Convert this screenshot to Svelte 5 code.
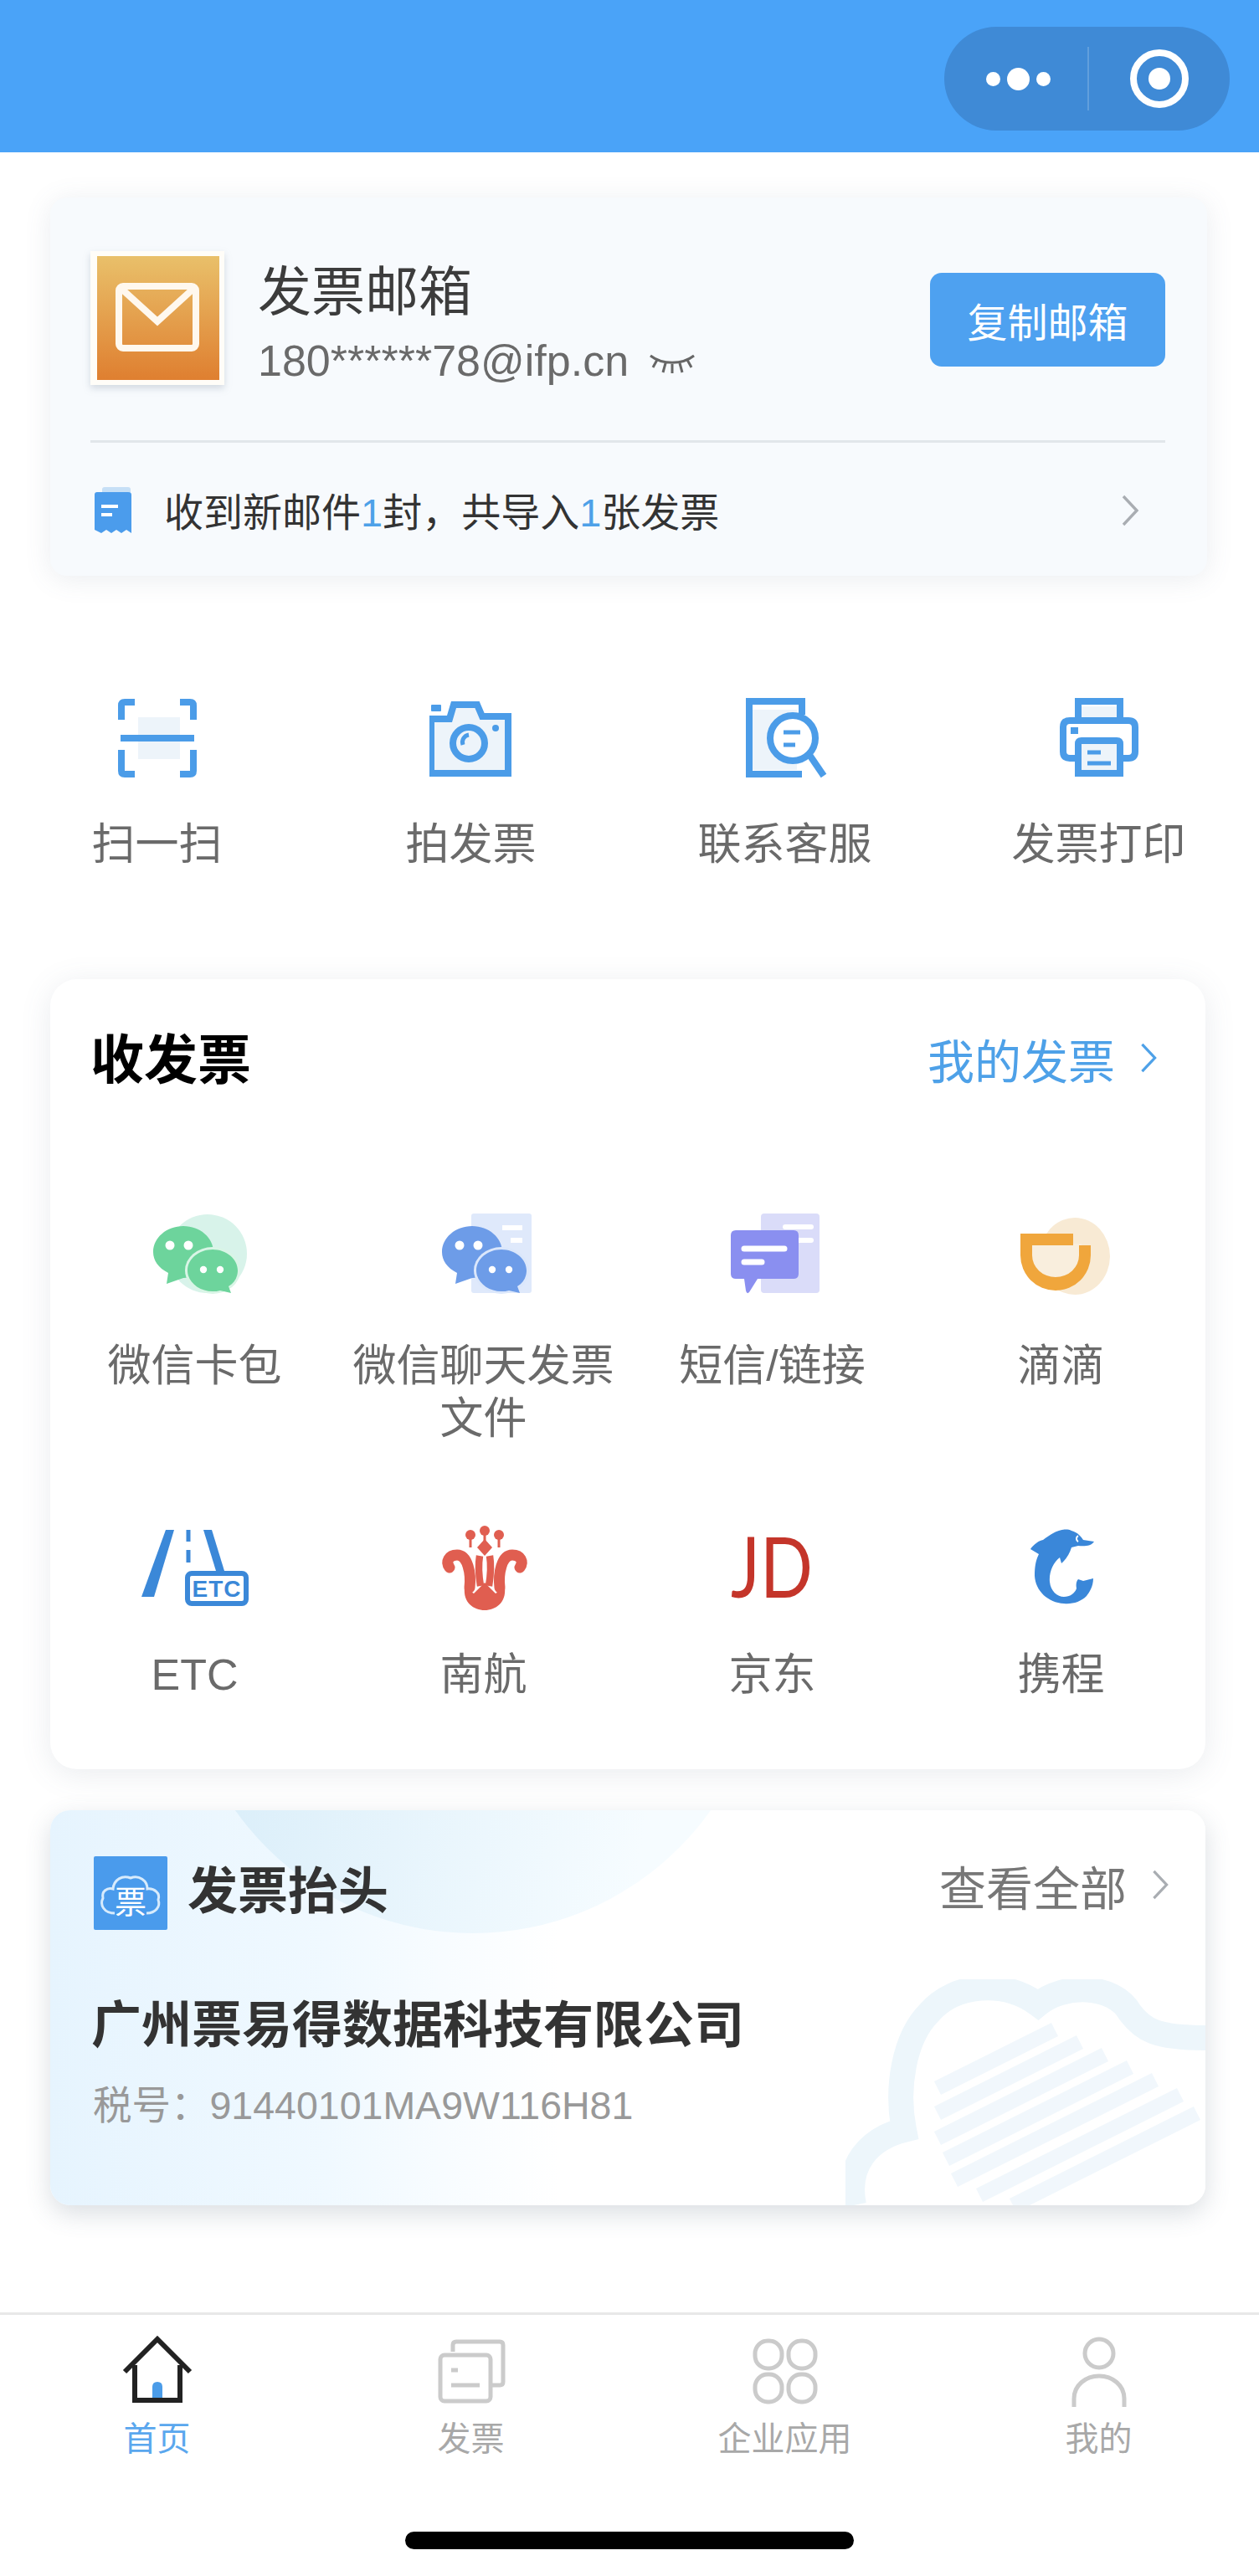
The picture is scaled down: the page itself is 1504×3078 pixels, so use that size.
<script>
  const receive1 = ['微信卡包', '微信聊天发票文件', '短信/链接', '滴滴'];
  const receive2 = ['ETC', '南航', '京东', '携程'];
</script>

{#snippet chevron(cls)}
  <svg class="chev {cls}" viewBox="0 0 24 40"><polyline points="4,3 20,20 4,37" /></svg>
{/snippet}

<div class="page">
  <header class="top">
    <div class="capsule">
      <div class="more"><i class="dot"></i><i class="dot big"></i><i class="dot"></i></div>
      <div class="sep"></div>
      <svg class="target" viewBox="0 0 80 80"><circle cx="40" cy="40" r="31" /><circle class="core" cx="40" cy="40" r="13" /></svg>
    </div>
  </header>

  <section class="mailbox">
    <div class="mail-top">
      <div class="mail-id">
        <svg class="mail-icon" viewBox="0 0 160 160">
          <defs><linearGradient id="mg" x1="0" y1="0" x2="0" y2="1"><stop offset="0" stop-color="#e9c06a" /><stop offset="1" stop-color="#df7f30" /></linearGradient></defs>
          <rect width="160" height="160" fill="#fffdf8" />
          <rect x="8" y="6" width="146" height="148" fill="url(#mg)" />
          <rect x="34" y="42" width="92" height="74" rx="5" fill="none" stroke="#fff8ee" stroke-width="8" />
          <polyline points="36,44 80,84 124,44" fill="none" stroke="#fff8ee" stroke-width="8" />
        </svg>
        <div class="mail-text">
          <div class="mail-title">发票邮箱</div>
          <div class="mail-addr">
            <span>180******78@ifp.cn</span>
            <svg class="eye" viewBox="0 0 56 30"><path d="M2 7 C16 18 40 18 54 7 M10 12 L5 21 M20 16 L17 27 M28 17 L28 28 M37 16 L40 27 M46 12 L51 21" /></svg>
          </div>
        </div>
      </div>
      <button class="copy">复制邮箱</button>
    </div>
    <div class="mail-note">
      <svg class="note-icon" viewBox="0 0 46 56">
        <rect x="10" y="0" width="34" height="46" rx="3" fill="#c6dff6" />
        <path d="M1 9 Q1 6 4 6 H41 Q45 6 45 9 V55 L39 51 L33 55 L27 51 L21 55 L15 51 L9 55 L1 51 Z" fill="#4b9cec" />
        <rect x="9" y="21" width="20" height="4" fill="#fff" /><rect x="9" y="31" width="13" height="4" fill="#fff" />
      </svg>
      <div class="note-text">收到新邮件<b>1</b>封，共导入<b>1</b>张发票</div>
      {@render chevron('grey')}
    </div>
  </section>

  <nav class="actions">
    <div class="action">
      <svg class="act-icon" viewBox="0 0 100 96">
        <rect x="27" y="23" width="50" height="50" fill="#edf4fa" />
        <path class="s" d="M23 5 H11 Q7 5 7 9 V26 M77 5 H89 Q93 5 93 9 V26 M7 62 V87 Q7 91 11 91 H23 M93 62 V87 Q93 91 89 91 H77" />
        <path class="s" d="M6 48 H94" />
      </svg>
      <span>扫一扫</span>
    </div>
    <div class="action">
      <svg class="act-icon" viewBox="2 0 100 96">
        <rect x="4" y="8" width="12" height="8" rx="1" fill="#4b9ce8" />
        <path d="M5 24 H24 L30 8 H60 L68 20 H95 V89 H5 Z" fill="#edf4fa" />
        <path class="s" d="M4 25 H26 L31 8 H59 L65 22 H96 V90 H4 Z" />
        <circle class="s" cx="49" cy="54" r="19" /><path class="t" d="M42 56 A9 9 0 0 1 49 44" />
        <circle cx="81" cy="36" r="4" fill="#4b9ce8" />
      </svg>
      <span>拍发票</span>
    </div>
    <div class="action">
      <svg class="act-icon" viewBox="0 0 100 96">
        <rect x="10" y="14" width="54" height="72" fill="#edf4fa" />
        <path class="s" d="M70 20 V4 H7 V91 H70" />
        <circle cx="59" cy="48" r="29" fill="#fff" /><circle class="s" cx="59" cy="48" r="27" />
        <path class="s" d="M79 68 L96 93" />
        <path class="t" d="M48 41 H68 M48 56 H62" />
      </svg>
      <span>联系客服</span>
    </div>
    <div class="action">
      <svg class="act-icon" viewBox="0 0 100 96">
        <path class="s" d="M25 28 V4 H75 V28" /><path d="M29 10 H71 V26 H29 Z" fill="#edf4fa" />
        <path class="s" d="M25 72 H15 Q7 72 7 64 V35 Q7 27 15 27 H85 Q93 27 93 35 V64 Q93 72 85 72 H75" />
        <rect x="16" y="35" width="9" height="8" fill="#4b9ce8" />
        <path d="M26 52 H74 V90 H26 Z" fill="#edf4fa" />
        <path class="s" d="M25 90 V55 Q25 51 29 51 H71 Q75 51 75 55 V90 Z" />
        <path class="t" d="M36 65 H52 M36 78 H64" />
      </svg>
      <span>发票打印</span>
    </div>
  </nav>

  <section class="receive">
    <div class="rc-head">
      <h2>收发票</h2>
      <div class="rc-link">我的发票 {@render chevron('blue')}</div>
    </div>
    <div class="rc-row one">
      <div class="rc-item">
        <svg class="rc-icon" viewBox="0 0 116 116">
          <circle cx="73" cy="56" r="47" fill="#d8f3ea" />
          <path d="M44 23 C64 23 80 37 80 54 C80 71 64 85 44 85 L24 92 L26 79 C14 73 8 64 8 54 C8 37 24 23 44 23Z" fill="#6dd49c" />
          <circle cx="28" cy="46" r="5.5" fill="#fff" /><circle cx="50" cy="46" r="5.5" fill="#fff" />
          <ellipse cx="79" cy="76" rx="33" ry="28" fill="#d9f5e6" />
          <path d="M79 51 C95 51 109 62 109 76 C109 84 105 91 98 95 L101 103 L88 100 C85 101 82 101 79 101 C63 101 49 90 49 76 C49 62 63 51 79 51Z" fill="#6dd49c" />
          <circle cx="68" cy="75" r="4.2" fill="#fff" /><circle cx="88" cy="75" r="4.2" fill="#fff" />
        </svg>
        <span>{receive1[0]}</span>
      </div>
      <div class="rc-item">
        <svg class="rc-icon" viewBox="0 0 116 116">
          <rect x="43" y="8" width="72" height="95" rx="3" fill="#dfe9fb" />
          <path d="M80 25 H104 M90 40 H104" stroke="#fff" stroke-width="6" />
          <path d="M44 23 C64 23 80 37 80 54 C80 71 64 85 44 85 L24 92 L26 79 C14 73 8 64 8 54 C8 37 24 23 44 23Z" fill="#6d9ce8" />
          <circle cx="29" cy="46" r="5.5" fill="#fff" /><circle cx="51" cy="46" r="5.5" fill="#fff" />
          <ellipse cx="79" cy="76" rx="33" ry="28" fill="#dbe7fb" />
          <path d="M79 51 C95 51 109 62 109 76 C109 84 105 91 98 95 L101 103 L88 100 C85 101 82 101 79 101 C63 101 49 90 49 76 C49 62 63 51 79 51Z" fill="#6d9ce8" />
          <circle cx="68" cy="75" r="4.2" fill="#fff" /><circle cx="88" cy="75" r="4.2" fill="#fff" />
        </svg>
        <span class="wrap">{receive1[1]}</span>
      </div>
      <div class="rc-item">
        <svg class="rc-icon" viewBox="0 0 116 116">
          <rect x="44" y="8" width="70" height="95" rx="4" fill="#dadcf9" />
          <path d="M73 24 H104 M89 40 H104" stroke="#fff" stroke-width="6" stroke-linecap="round" />
          <path d="M14 28 H83 Q89 28 89 34 V80 Q89 86 83 86 H40 L30 102 Q27 105 26 100 L24 86 H14 Q8 86 8 80 V34 Q8 28 14 28Z" fill="#8a8ff0" />
          <path d="M24 50 H72 M24 66 H45" stroke="#fff" stroke-width="7" stroke-linecap="round" />
        </svg>
        <span>{receive1[2]}</span>
      </div>
      <div class="rc-item">
        <svg class="rc-icon" viewBox="0 0 116 116">
          <ellipse cx="74" cy="59" rx="42" ry="46" fill="#f8ead4" />
          <path d="M20 44 H82 V58 A31 29 0 0 1 20 58 Z" fill="#f9eedd" />
          <path fill-rule="evenodd" d="M9 32 H72 V46 H93 V58 A42 42 0 0 1 9 58 Z M23 46 V58 A28 26 0 0 0 79 58 V46 Z" fill="#f0a63c" />
        </svg>
        <span>{receive1[3]}</span>
      </div>
    </div>
    <div class="rc-row two">
      <div class="rc-item">
        <svg class="rc-icon" viewBox="0 0 116 116">
          <path d="M23 17 H33 L9 97 H-6 Z" fill="#3b88d8" />
          <path d="M50 17 V31 M50 41 V56" stroke="#3b88d8" stroke-width="5" />
          <path d="M68 17 H78 L93 66 H83 Z" fill="#3b88d8" />
          <rect x="49" y="69" width="70" height="36" rx="5" fill="#fff" stroke="#3b88d8" stroke-width="6" />
          <text class="etc" x="84" y="97" text-anchor="middle">ETC</text>
        </svg>
        <span>{receive2[0]}</span>
      </div>
      <div class="rc-item">
        <svg class="rc-icon" viewBox="0 0 116 116">
          <g fill="#e05e50">
            <circle cx="42" cy="23" r="6" /><circle cx="59" cy="18" r="6" /><circle cx="76" cy="23" r="6" />
            <path d="M59 28 L68 38 L59 48 L50 38Z" />
            <path d="M35 86 L46 93 L59 80 L72 93 L83 86 C85 104 72 113 59 113 C46 113 33 104 35 86Z" />
          </g>
          <path d="M41 86 C43 70 39 47 26 47 C16 47 12 55 17 62 M77 86 C75 70 79 47 92 47 C102 47 106 55 101 62" fill="none" stroke="#e05e50" stroke-width="13" stroke-linecap="round" />
          <path d="M53 48 C51 60 52 72 54 84 M65 48 C67 60 66 72 64 84" fill="none" stroke="#e05e50" stroke-width="8.5" />
          <path d="M42 28 V38 M76 28 V38 M59 22 V30" stroke="#e05e50" stroke-width="3" />
        </svg>
        <span>{receive2[1]}</span>
      </div>
      <div class="rc-item">
        <svg class="rc-icon" viewBox="0 0 116 116">
          <text class="jd" x="8" y="98" textLength="98" lengthAdjust="spacingAndGlyphs">JD</text>
        </svg>
        <span>{receive2[2]}</span>
      </div>
      <div class="rc-item">
        <svg class="rc-icon" viewBox="0 0 116 116">
          <path d="M48 21 C55 17 64 15 70 18 C78 20 82 26 84 29 L97 31 C94 36 86 37 78 36 L70 38 C68 45 64 52 58 57 L56 50 C48 56 43 68 44 79 C45 90 53 97 61 97 C68 97 74 93 76 87 C75 82 76 78 78 76 L84 78 L96 75 C96 85 91 92 88 96 C81 103 71 106 61 105 C42 104 27 90 26 72 C26 62 27 54 31 46 L21 40 C25 34 31 30 36 29 C40 26 44 23 48 21Z" fill="#3a87d9" />
          <path d="M78 24 A4 4 0 0 0 78 31" fill="none" stroke="#fff" stroke-width="2" />
        </svg>
        <span>{receive2[3]}</span>
      </div>
    </div>
  </section>

  <section class="heading">
    <div class="hd-bg-circle"></div>
    <svg class="hd-cloud" viewBox="0 0 430 270">
      <path d="M10 270 C0 220 30 190 70 180 C60 130 70 70 100 40 C130 5 190 0 230 30 C260 5 320 5 340 40 C355 60 370 70 430 70" fill="none" stroke="#edf6fb" stroke-width="30" />
      <g stroke="#f1f7fc" stroke-width="18" fill="none">
        <path d="M110 130 L250 60 M110 160 L280 75 M110 190 L310 90 M120 215 L340 105 M130 240 L370 120 M160 258 L400 138 M200 270 L420 160" />
      </g>
    </svg>
    <div class="hd-head">
      <svg class="hd-icon" viewBox="0 0 88 88">
        <rect width="88" height="88" rx="2" fill="#4a9bec" />
        <path d="M25 68 C12 68 7 58 11 50 C9 42 16 37 23 39 C24 28 34 22 44 26 C54 22 64 29 64 39 C72 38 80 44 77 52 C80 60 74 68 63 68" fill="none" stroke="#d7ebfc" stroke-width="3" />
        <text class="hd-piao" x="44" y="68" text-anchor="middle">票</text>
      </svg>
      <div class="hd-title">发票抬头</div>
      <div class="hd-link">查看全部 {@render chevron('grey')}</div>
    </div>
    <div class="company">广州票易得数据科技有限公司</div>
    <div class="tax">税号：<span>91440101MA9W116H81</span></div>
  </section>

  <footer class="tabs">
    <div class="tab active">
      <svg class="tab-icon" viewBox="0 0 84 84">
        <path d="M3 42 L42 3 L81 42 M15 34 V76 H69 V34" fill="none" stroke="#222" stroke-width="6" stroke-linejoin="miter" />
        <path d="M36 73 V60 Q36 54 42 54 Q48 54 48 60 V73Z" fill="#4b9ce8" />
      </svg>
      <span>首页</span>
    </div>
    <div class="tab">
      <svg class="tab-icon" viewBox="0 0 84 84">
        <path class="g" d="M20 18 V10 Q20 6 24 6 H76 Q80 6 80 10 V54 Q80 58 76 58 H66" />
        <rect class="g" x="5" y="22" width="60" height="55" rx="5" />
        <path class="g" d="M18 40 H26 M18 58 H52" />
      </svg>
      <span>发票</span>
    </div>
    <div class="tab">
      <svg class="tab-icon" viewBox="0 0 84 84">
        <rect class="g" x="6" y="5" width="32" height="33" rx="15" /><rect class="g" x="46" y="5" width="32" height="33" rx="15" />
        <rect class="g" x="6" y="45" width="32" height="33" rx="15" /><rect class="g" x="46" y="45" width="32" height="33" rx="15" />
      </svg>
      <span>企业应用</span>
    </div>
    <div class="tab">
      <svg class="tab-icon" viewBox="0 0 84 84">
        <circle class="g" cx="42" cy="20" r="17" />
        <path class="g" d="M12 84 V74 C12 58 26 47 42 47 C58 47 72 58 72 74 V84" />
      </svg>
      <span>我的</span>
    </div>
  </footer>
  <div class="home-bar"></div>
</div>

<style>
  :global(body) { margin: 0; background: #fff; }
  .page {
    width: 1504px;
    height: 3078px;
    overflow: hidden;
    font-family: "Liberation Sans", "Noto Sans CJK SC", sans-serif;
    color: #666;
    background: #fff;
    position: relative;
  }
  .top {
    height: 182px;
    background: #4aa3f8;
    display: flex;
    justify-content: flex-end;
    padding: 32px 35px 0 0;
    box-sizing: border-box;
  }
  .capsule {
    width: 341px;
    height: 124px;
    border-radius: 62px;
    background: #3f8ad6;
    display: flex;
    align-items: center;
  }
  .more { width: 171px; display: flex; align-items: center; justify-content: center; gap: 8px; padding-left: 5px; box-sizing: border-box; }
  .dot { width: 17px; height: 17px; border-radius: 50%; background: #fff; display: block; }
  .dot.big { width: 27px; height: 27px; }
  .sep { width: 2px; height: 76px; background: rgba(255, 255, 255, .18); }
  .target { width: 80px; height: 80px; margin-left: 44px; }
  .target circle { fill: none; stroke: #fff; stroke-width: 8; }
  .target .core { fill: #fff; stroke: none; }

  .chev { display: block; flex: none; fill: none; stroke-width: 3.4; }
  .chev polyline { fill: none; stroke: inherit; stroke-width: inherit; }
  .chev.grey { stroke: #a9adb2; }
  .chev.blue { stroke: #4ea1e8; }

  .mailbox {
    margin: 54px 62px 0 60px;
    height: 452px;
    border-radius: 20px;
    background: #f7fafd;
    box-shadow: 0 4px 32px rgba(90, 110, 130, .12);
    padding: 0 50px 0 48px;
    box-sizing: border-box;
  }
  .mail-top {
    height: 290px;
    border-bottom: 3px solid #e1e6ea;
    display: flex;
    align-items: center;
    justify-content: space-between;
  }
  .mail-id { display: flex; align-items: center; gap: 40px; }
  .mail-icon { width: 160px; height: 160px; display: block; margin-top: -3px; filter: drop-shadow(0 4px 4px rgba(100, 120, 140, .25)); }
  .mail-text { padding-top: 10px; }
  .mail-title { font-size: 64px; line-height: 76px; color: #3c3c3c; }
  .mail-addr { display: flex; align-items: center; gap: 24px; font-size: 52px; line-height: 60px; color: #6a6a6a; margin-top: 14px; }
  .eye { width: 56px; height: 30px; fill: none; stroke: #666; stroke-width: 3; margin-top: 4px; }
  .eye path { fill: none; stroke: inherit; stroke-width: inherit; }
  .copy {
    width: 281px;
    height: 112px;
    border: 0;
    border-radius: 14px;
    background: #4ea1f0;
    color: #fff;
    font: inherit;
    font-size: 48px;
    margin-top: 2px;
    padding: 0;
  }
  .mail-note { height: 162px; display: flex; align-items: center; padding: 0 0 0 4px; box-sizing: border-box; }
  .note-icon { width: 46px; height: 56px; margin-right: 38px; flex: none; }
  .note-text { flex: 1; font-size: 47px; color: #333; margin-top: -4px; }
  .note-text b { font-weight: 400; color: #4ea1e8; }
  .mail-note .chev { width: 24px; height: 40px; margin-right: 30px; }

  .actions {
    display: grid;
    grid-template-columns: repeat(4, 375px);
    margin-top: 146px;
    height: 205px;
  }
  .action { display: flex; flex-direction: column; align-items: center; font-size: 52px; color: #6a6a6a; }
  .action span { line-height: 60px; margin-top: 49px; }
  .act-icon { width: 100px; height: 96px; display: block; }
  .s { fill: none; stroke: #4b9ce8; stroke-width: 8; }
  .t { fill: none; stroke: #4b9ce8; stroke-width: 5; }

  .receive {
    margin: 131px 64px 0 60px;
    height: 944px;
    border-radius: 32px;
    background: #fff;
    box-shadow: 0 6px 36px rgba(90, 110, 130, .13);
    box-sizing: border-box;
    padding-top: 66px;
  }
  .rc-head { display: flex; justify-content: space-between; align-items: center; height: 60px; padding: 0 54px 0 48px; }
  h2 { margin: 2px 0 0; font-size: 64px; line-height: 60px; font-weight: 700; color: #000; }
  .rc-link { display: flex; align-items: center; gap: 28px; font-size: 56px; color: #4ea1e8; margin: -4px 2px 0 0; }
  .rc-link .chev { width: 24px; height: 38px; }
  .rc-row { display: grid; grid-template-columns: repeat(4, 345px); }
  .rc-row.one { margin-top: 146px; height: 283px; }
  .rc-row.two { margin-top: 86px; }
  .rc-item { display: flex; flex-direction: column; align-items: center; font-size: 52px; line-height: 63px; color: #6a6a6a; text-align: center; }
  .rc-item span { display: block; margin-top: 43px; }
  .rc-item .wrap { width: 325px; }
  .rc-icon { width: 116px; height: 116px; display: block; overflow: visible; }
  .etc { font-family: "Liberation Sans", sans-serif; font-weight: 700; font-size: 28px; fill: #3b88d8; letter-spacing: 1px; }
  .jd { font-family: "Lato", sans-serif; font-size: 100px; font-weight: 400; fill: #c4352a; }

  .heading {
    position: relative;
    overflow: hidden;
    margin: 49px 64px 0 60px;
    height: 472px;
    border-radius: 24px;
    background: linear-gradient(90deg, #e6f4fe 0%, #f0f9ff 24%, #ffffff 44%);
    box-shadow: 0 10px 30px rgba(70, 90, 110, .2);
    box-sizing: border-box;
    padding: 55px 42px 0 52px;
  }
  .hd-bg-circle {
    position: absolute;
    left: 157px;
    top: -549px;
    width: 696px;
    height: 696px;
    border-radius: 50%;
    background: linear-gradient(100deg, #dceffa 20%, #f6fcff 80%);
  }
  .hd-cloud { position: absolute; right: 0; bottom: 0; width: 430px; height: 270px; }
  .hd-head, .company, .tax { position: relative; }
  .hd-head { display: flex; align-items: center; height: 88px; }
  .hd-icon { width: 88px; height: 88px; flex: none; }
  .hd-piao { font-size: 38px; fill: #fff; }
  .hd-title { flex: 1; margin-left: 24px; font-size: 60px; font-weight: 700; color: #333; margin-top: -16px; }
  .hd-link { display: flex; align-items: center; gap: 28px; font-size: 56px; color: #777; margin-top: -20px; }
  .hd-link .chev { width: 24px; height: 38px; }
  .company { margin: 80px 0 0 -3px; font-size: 60px; line-height: 70px; font-weight: 700; color: #333; white-space: nowrap; }
  .tax { margin: 32px 0 0 -1px; font-size: 46.5px; line-height: 56px; color: #999; }

  .tabs {
    position: absolute;
    left: 0;
    top: 2763px;
    width: 1504px;
    border-top: 3px solid #e8e8e8;
    display: grid;
    grid-template-columns: repeat(4, 375px);
    padding-top: 26px;
    box-sizing: border-box;
  }
  .tab { display: flex; flex-direction: column; align-items: center; font-size: 40px; color: #a8a8a8; }
  .tab span { line-height: 48px; margin-top: 14px; }
  .tab.active span { color: #5aa7ee; }
  .tab-icon { width: 84px; height: 84px; display: block; overflow: visible; }
  .g { fill: none; stroke: #cbcbcb; stroke-width: 5; }
  .home-bar {
    position: absolute;
    left: 484px;
    top: 3025px;
    width: 536px;
    height: 21px;
    border-radius: 11px;
    background: #000;
  }
</style>
